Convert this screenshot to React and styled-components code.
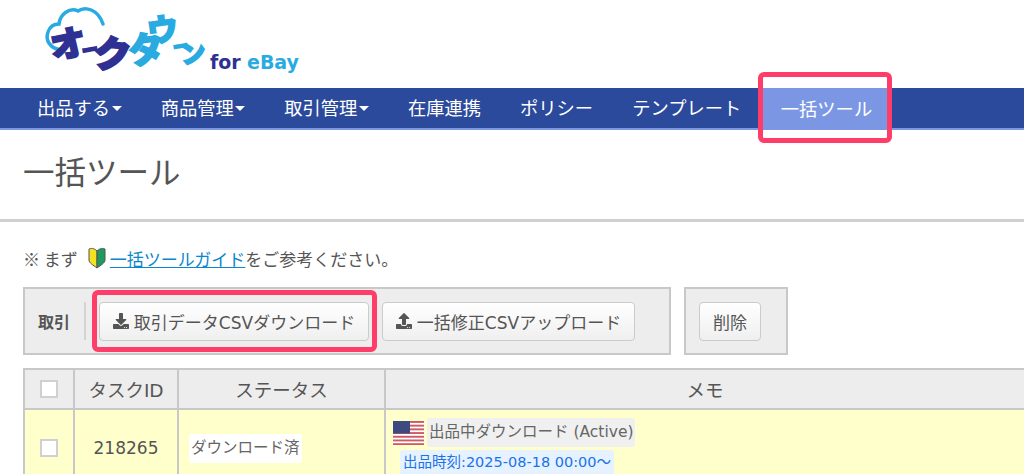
import React from "react";
import styled, { createGlobalStyle } from "styled-components";
import { FaDownload, FaUpload } from "react-icons/fa";

const Global = createGlobalStyle`
  html, body { margin: 0; padding: 0; background: #fff; }
  body { font-family: "DejaVu Sans", "Noto Sans CJK JP", sans-serif; color: #555; }
`;
const Page = styled.div`
  position: relative;
  width: 1024px;
  height: 474px;
  overflow: hidden;
`;
const Header = styled.header`
  height: 88px;
  padding-left: 40px;
`;
const Nav = styled.nav`
  height: 40px;
  padding-left: 17.5px;
  display: flex;
  background: #2c4a9c;
  border-bottom: 2px solid #7b97e4;
`;
const NavItem = styled.a`
  display: flex;
  align-items: center;
  padding: 0 ${p => (p.$active ? "20px" : "19.5px")} 2px;
  margin-bottom: ${p => (p.$active ? "-2px" : "0")};
  background: ${p => (p.$active ? "#7b97e4" : "transparent")};
  color: #fff;
  font-family: "Noto Sans CJK JP", sans-serif;
  font-size: 18.3px;
  white-space: nowrap;
`;
const Caret = styled.span`
  width: 0;
  height: 0;
  margin-left: 1.5px;
  margin-top: 3px;
  border-left: 5px solid transparent;
  border-right: 5px solid transparent;
  border-top: 5px solid #fff;
`;
const TitleBar = styled.div`
  height: 92px;
  padding: 18px 0 0 23px;
  box-sizing: border-box;
  border-bottom: 3px solid #d0d0d0;
`;
const Title = styled.h1`
  margin: 0;
  font-family: "Noto Sans CJK JP", sans-serif;
  font-size: 31.5px;
  line-height: 44px;
  font-weight: 400;
  color: #555;
`;
const Guide = styled.p`
  margin: 0;
  padding: 23px 0 0 23px;
  height: 65px;
  box-sizing: border-box;
  display: flex;
  align-items: flex-start;
  font-family: "Noto Sans CJK JP", sans-serif;
  font-size: 17px;
  line-height: 28px;
  color: #555;
`;
const Mark = styled.svg`
  width: 20px;
  height: 22px;
  margin: 2px 3px 0 9px;
`;
const GuideLink = styled.a`
  color: #0a86cc;
  text-decoration: underline;
`;
const Toolbars = styled.div`
  display: flex;
  gap: 13px;
  padding-left: 23px;
`;
const Toolbar = styled.div`
  display: flex;
  align-items: center;
  gap: 13px;
  height: 68px;
  box-sizing: border-box;
  padding: 0 ${p => p.$right}px 0 13px;
  background: #ededed;
  border: 2px solid #c8c8c8;
`;
const GroupLabel = styled.strong`
  font-family: "Noto Sans CJK JP", sans-serif;
  font-size: 16px;
  font-weight: 700;
  color: #555;
  padding-right: 14px;
  line-height: 38px;
  border-right: 2px solid #d4d4d4;
`;
const Button = styled.button`
  display: flex;
  align-items: center;
  justify-content: center;
  gap: 5px;
  height: 39px;
  padding: 0;
  box-sizing: border-box;
  width: ${p => p.$w}px;
  background: linear-gradient(#fff, #efefef);
  border: 1.5px solid #cbcbcb;
  border-radius: 4px;
  color: #555;
  font-family: "DejaVu Sans", "Noto Sans CJK JP", sans-serif;
  font-size: 17px;
  white-space: nowrap;
  svg { width: 16px; height: 16px; flex: none; }
`;
const Table = styled.table`
  margin: 13px 0 0 23px;
  width: 1003px;
  table-layout: fixed;
  border-collapse: collapse;
  border: 2px solid #c8c8c8;
  border-right: 0;
`;
const Th = styled.th`
  height: 40px;
  padding: 0;
  box-sizing: border-box;
  background: #ededed;
  border: 2px solid #c8c8c8;
  font-family: "DejaVu Sans", "Noto Sans CJK JP", sans-serif;
  font-size: 18.5px;
  font-weight: 400;
  color: #555;
`;
const Td = styled.td`
  height: 78px;
  box-sizing: border-box;
  padding: ${p => (p.$memo ? "8px 0 0 7px" : "0")};
  background: #ffffcc;
  border: 2px solid #c8c8c8;
  border-bottom: 0;
  text-align: ${p => (p.$left ? "left" : "center")};
  vertical-align: ${p => (p.$memo ? "top" : "middle")};
  font-size: 17px;
  color: #555;
`;
const Check = styled.span`
  display: block;
  width: 18px;
  height: 18px;
  box-sizing: border-box;
  margin: 0 auto;
  background: #fff;
  border: 2px solid #d0d0d0;
`;
const Chip = styled.span`
  display: inline-block;
  padding: 0 ${p => p.$pad || 2}px;
  background: ${p => p.$bg};
  color: ${p => p.$color || "#666"};
  border-radius: 3px;
  font-family: "DejaVu Sans", "Noto Sans CJK JP", sans-serif;
  font-size: ${p => p.$size || 15.5}px;
  line-height: ${p => p.$lh || 29}px;
  white-space: nowrap;
`;
const StatusCell = styled.div`
  display: flex;
  align-items: center;
  padding-left: 10px;
`;
const MemoRow = styled.div`
  display: flex;
  align-items: center;
  gap: 3px;
`;
const SubRow = styled.div`
  padding: 3px 0 0 7px;
`;
const Flag = styled.svg`
  width: 31px;
  height: 24px;
  flex: none;
`;
const Frame = styled.div`
  position: absolute;
  left: ${p => p.$x}px;
  top: ${p => p.$y}px;
  width: ${p => p.$w}px;
  height: ${p => p.$h}px;
  box-sizing: border-box;
  border: 5px solid #ff3d68;
  border-radius: 6px;
`;

const Logo = () => (
  <svg width="270" height="88" viewBox="40 0 270 88" fontFamily='"Noto Sans CJK JP", sans-serif' fontWeight="900">
    <path d="M62 50 C50 49 45 40 48 32 C50 26 55 24 59 24 C60 14 70 7 78 11 C85 6 98 9 103 24" fill="none" stroke="#29abe2" strokeWidth="3.5" strokeLinecap="round" />
    <g fill="#2e3192" stroke="#2e3192" strokeWidth="1.8">
      <text transform="translate(53 60) rotate(-12) scale(1.1 1.05)" fontSize="33">オ</text>
      <text transform="translate(83 57) rotate(-10)" fontSize="16">ー</text>
      <text transform="translate(92 66) rotate(6) scale(1.05 1.05)" fontSize="36">ク</text>
    </g>
    <g fill="#29abe2" stroke="#29abe2" strokeWidth="1.6">
      <text transform="translate(130 65) rotate(-8)" fontSize="36">タ</text>
      <text transform="translate(149 43) rotate(-8)" fontSize="31">ウ</text>
      <text transform="translate(174 53) rotate(-10)" fontSize="15">ー</text>
      <text transform="translate(182 64) rotate(-8)" fontSize="25">ン</text>
    </g>
    <text x="210" y="69" fontFamily='"DejaVu Sans", sans-serif' fontSize="19" fontWeight="700" fill="#2e3192">for</text>
    <text x="247" y="69" fontFamily='"DejaVu Sans", sans-serif' fontSize="19" fontWeight="700" fill="#29abe2">eBay</text>
  </svg>
);

const UsFlag = () => (
  <Flag viewBox="0 0 31 24">
    <rect width="31" height="24" fill="#fff" />
    {[0, 1, 2, 3, 4, 5, 6].map(i => (
      <rect key={i} y={i * 3.7} width="31" height="1.9" fill="#cf5a64" />
    ))}
    <rect width="17" height="12.5" fill="#3d4a80" />
  </Flag>
);

const App = () => (
  <Page>
    <Global />
    <Header><Logo /></Header>
    <Nav>
      <NavItem>出品する<Caret /></NavItem>
      <NavItem>商品管理<Caret /></NavItem>
      <NavItem>取引管理<Caret /></NavItem>
      <NavItem>在庫連携</NavItem>
      <NavItem>ポリシー</NavItem>
      <NavItem>テンプレート</NavItem>
      <NavItem $active>一括ツール</NavItem>
    </Nav>
    <TitleBar><Title>一括ツール</Title></TitleBar>
    <Guide>
      ※ まず
      <Mark viewBox="0 0 20 22">
        <path d="M10 4 C7 1 4 1 2 2 L2 13 C2 16 6 18 10 21 Z" fill="#f5e11f" stroke="#555" strokeWidth="1" />
        <path d="M10 4 C13 1 16 1 18 2 L18 13 C18 16 14 18 10 21 Z" fill="#1e9960" stroke="#555" strokeWidth="1" />
      </Mark>
      <GuideLink>一括ツールガイド</GuideLink>をご参考ください。
    </Guide>
    <Toolbars>
      <Toolbar $right={34}>
        <GroupLabel>取引</GroupLabel>
        <Button $w={270}><FaDownload />取引データCSVダウンロード</Button>
        <Button $w={253}><FaUpload />一括修正CSVアップロード</Button>
      </Toolbar>
      <Toolbar $right={25}>
        <Button $w={62}>削除</Button>
      </Toolbar>
    </Toolbars>
    <Table>
      <colgroup>
        <col width="50" /><col width="104" /><col width="207" /><col />
      </colgroup>
      <thead>
        <tr>
          <Th><Check /></Th>
          <Th>タスクID</Th>
          <Th>ステータス</Th>
          <Th>メモ</Th>
        </tr>
      </thead>
      <tbody>
        <tr>
          <Td><Check /></Td>
          <Td>218265</Td>
          <Td $left><StatusCell><Chip $bg="#fff">ダウンロード済</Chip></StatusCell></Td>
          <Td $left $memo>
            <MemoRow>
              <UsFlag />
              <Chip $bg="#f0f0f0">出品中ダウンロード (Active)</Chip>
            </MemoRow>
            <SubRow>
              <Chip $bg="#e6f2ff" $color="#1a73e8" $size={14.5} $lh={25} $pad={3}>出品時刻:2025-08-18 00:00〜</Chip>
            </SubRow>
          </Td>
        </tr>
      </tbody>
    </Table>
    <Frame $x={758} $y={72} $w={134} $h={71} />
    <Frame $x={92} $y={290} $w={285} $h={62} />
  </Page>
);

export default App;
